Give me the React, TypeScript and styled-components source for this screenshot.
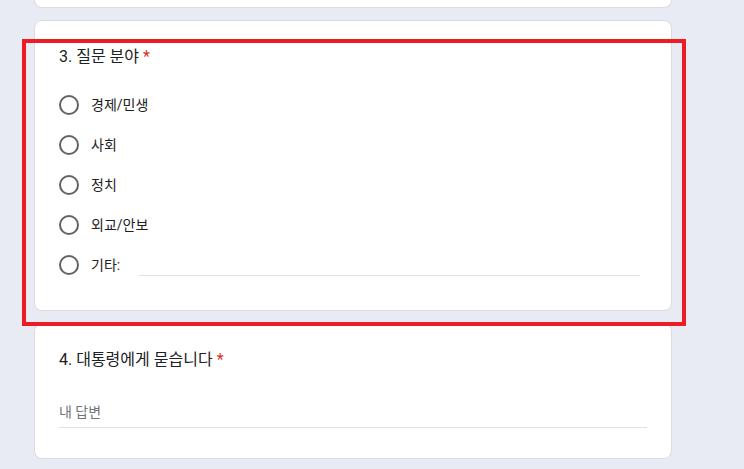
import {FC} from "react";
import styled, {createGlobalStyle} from "styled-components";

const colors = {
  page: "#e8ebf3",
  card: "#ffffff",
  border: "#dadce0",
  text: "#202124",
  muted: "#70757a",
  radio: "#5f6368",
  required: "#d93025",
  line: "#e0e0e0",
  mark: "#ed1c24",
}

const options = ["경제/민생", "사회", "정치", "외교/안보"]

const App:FC = () => {
  return(
    <Page>
      <GlobalStyle/>
      <Card clipped/>

      <Card>
        <QuestionTitle>
          3. 질문 분야<Required>*</Required>
        </QuestionTitle>
        <OptionList>
          {options.map(option => (
            <OptionRow key={option}>
              <Radio/>
              <OptionLabel>{option}</OptionLabel>
            </OptionRow>
          ))}
          <OptionRow>
            <Radio/>
            <OptionLabel>기타:</OptionLabel>
            <OtherInput/>
          </OptionRow>
        </OptionList>
      </Card>

      <Card>
        <QuestionTitle>
          4. 대통령에게 묻습니다<Required>*</Required>
        </QuestionTitle>
        <AnswerInput placeholder="내 답변"/>
      </Card>

      <Highlight/>
    </Page>
  )
}

const GlobalStyle = createGlobalStyle`
  html, body {
    margin: 0;
    padding: 0;
    background-color: ${colors.page};
    font-family: Roboto, "Noto Sans CJK KR", sans-serif;
  }
`
const Page = styled.div`
  position: relative;
  width: 744px;
  height: 469px;
  overflow: hidden;
  padding: 0 0 0 34px;
  box-sizing: border-box;
  display: flex;
  flex-direction: column;
  gap: 12px;
  background-color: ${colors.page};
`
const Card = styled.div<{clipped?: boolean}>`
  width: 638px;
  box-sizing: border-box;
  padding: 24px 24px 25px;
  border: 1px solid ${colors.border};
  border-radius: 8px;
  background-color: ${colors.card};

  ${props => props.clipped && `
    height: 8px;
    padding: 0;
    border-top: 0;
    border-radius: 0 0 8px 8px;
  `}
`
const QuestionTitle = styled.div`
  font-size: 16px;
  line-height: 24px;
  color: ${colors.text};
`
const Required = styled.span`
  margin: 0 0 0 4px;
  color: ${colors.required};
`
const OptionList = styled.div`
  margin: 16px 0 0;
  display: flex;
  flex-direction: column;
`
const OptionRow = styled.label`
  height: 40px;
  display: flex;
  align-items: center;
`
const Radio = styled.span`
  width: 20px;
  height: 20px;
  box-sizing: border-box;
  flex-shrink: 0;
  border: 2px solid ${colors.radio};
  border-radius: 50%;
`
const OptionLabel = styled.span`
  margin: 0 0 0 12px;
  font-size: 14px;
  line-height: 20px;
  color: ${colors.text};
`
const OtherInput = styled.div`
  flex: 1;
  height: 20px;
  margin: 0 7px 0 19px;
  border-bottom: 1px solid ${colors.line};
`
const AnswerInput = styled.input`
  display: block;
  width: 100%;
  height: 40px;
  margin: 16px 0 5px;
  padding: 14px 0 5px;
  box-sizing: border-box;
  border: 0;
  border-bottom: 1px solid ${colors.line};
  font-family: inherit;
  font-size: 14px;
  line-height: 20px;
  color: ${colors.text};
  background: transparent;

  &::placeholder{
    color: ${colors.muted};
  }

  &:focus{
    outline: none;
  }
`
const Highlight = styled.div`
  position: absolute;
  left: 22px;
  top: 39px;
  width: 664px;
  height: 287px;
  box-sizing: border-box;
  border: 4px solid ${colors.mark};
  pointer-events: none;
`

export default App
